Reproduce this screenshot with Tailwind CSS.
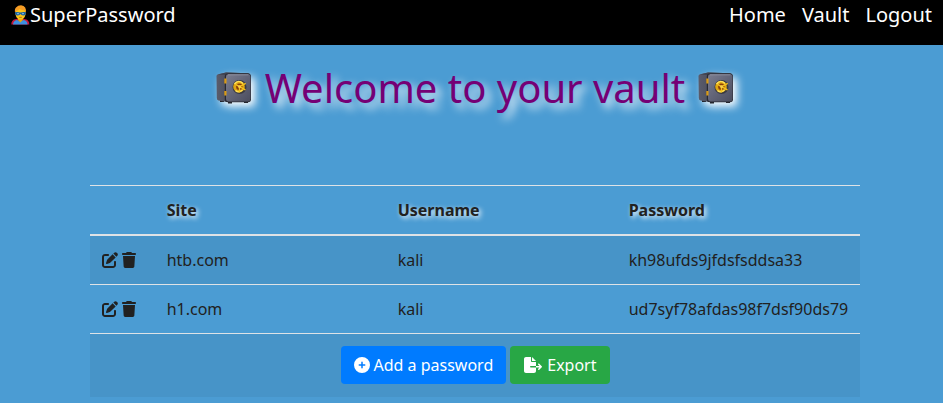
<!DOCTYPE html>
<html lang="en">
<head>
<meta charset="utf-8">
<meta name="viewport" content="width=device-width, initial-scale=1">
<title>SuperPassword</title>
<script src="https://cdn.jsdelivr.net/npm/@tailwindcss/browser@4"></script>
</head>
<body class="min-h-screen bg-[#4b9cd3] font-['Noto_Sans',sans-serif] text-base text-[#212121]">
<svg class="absolute size-0" aria-hidden="true">
  <defs>
    <linearGradient id="face" x1="0" y1="0" x2="1" y2="1">
      <stop offset="0" stop-color="#7b7d8f"/><stop offset=".5" stop-color="#626477"/><stop offset="1" stop-color="#4b4d5e"/>
    </linearGradient>
    <linearGradient id="side" x1="0" y1="0" x2="1" y2="0">
      <stop offset="0" stop-color="#5a5c6c"/><stop offset="1" stop-color="#343641"/>
    </linearGradient>
  </defs>
  <symbol id="safe" viewBox="0 0 36 32">
    <path d="M4 27h4v3H4zM12 29h4v2.500h-4zM28 28.500h4v2.500h-4z" fill="#23242c"/>
    <path d="M.5 4Q.5 2.800 2 2.300L10 .5l22 .7q2 0 2 2L11 30 2.500 28.500Q.8 28 .8 26z" fill="url(#side)"/>
    <path d="M2 2.500 10 .5l22 .7 1 1-23 .8z" fill="#41434f"/>
    <rect x="8.800" y="1.500" width="26.200" height="28.800" rx="3" fill="#292a33"/>
    <rect x="10" y="2.300" width="24.500" height="27.200" rx="2.400" fill="url(#face)"/>
    <path d="M12 2.800h20.500" stroke="#9c9eae" stroke-width=".7"/>
    <path d="M8.300 6.500h2.200v5H8.300zM8.300 19h2.200v4.500H8.300z" fill="#d99b16"/>
    <circle cx="23.500" cy="15" r="7" fill="#3a3a42"/>
    <circle cx="23" cy="14.700" r="5.800" fill="#dfa712"/>
    <path d="M18.500 12q4-5 8.500-.5M19.500 18.500q3 3 7-.5" fill="none" stroke="#ffe05a" stroke-width="1.400"/>
    <circle cx="23.300" cy="14.700" r="3.200" fill="#8a3f0c"/>
    <path d="m23.500 14.700-3.500-2M23.500 14.700l5.800-3M23.500 14.700v5M23.500 14.700l5.500 3" stroke="#f5c11c" stroke-width="1.400" stroke-linecap="round"/>
    <circle cx="23.500" cy="14.700" r="1.400" fill="#f7d14b"/>
  </symbol>
  <symbol id="pen" viewBox="0 0 512 512"><path fill="currentColor" d="M471.600 21.700c-21.900-21.900-57.300-21.900-79.200 0L362.300 51.700l97.900 97.900 30.100-30.100c21.900-21.900 21.900-57.300 0-79.200L471.600 21.700zm-299.200 220c-6.100 6.100-10.800 13.600-13.500 21.900l-29.600 88.800c-2.900 8.600-.6 18.100 5.800 24.600s15.900 8.700 24.600 5.800l88.800-29.600c8.200-2.700 15.700-7.400 21.900-13.500L437.700 172.300 339.700 74.300 172.400 241.700zM96 64C43 64 0 107 0 160V416c0 53 43 96 96 96H352c53 0 96-43 96-96V320c0-17.700-14.300-32-32-32s-32 14.300-32 32v96c0 17.700-14.300 32-32 32H96c-17.700 0-32-14.300-32-32V160c0-17.700 14.300-32 32-32h96c17.700 0 32-14.300 32-32s-14.300-32-32-32H96z"/></symbol>
  <symbol id="trash" viewBox="0 0 448 512"><path fill="currentColor" d="M135.200 17.700L128 32H32C14.300 32 0 46.300 0 64S14.300 96 32 96H416c17.700 0 32-14.300 32-32s-14.300-32-32-32H320l-7.200-14.300C307.400 6.800 296.300 0 284.200 0H163.800c-12.100 0-23.200 6.800-28.600 17.700zM416 128H32L53.200 467c1.600 25.300 22.600 45 47.900 45H346.900c25.300 0 46.300-19.700 47.900-45L416 128z"/></symbol>
</svg>

<nav class="flex h-[45px] items-start justify-between bg-black px-[11px] text-xl leading-[30px] text-white">
  <a href="#" class="flex items-center">
    <svg class="h-5 w-[19px]" viewBox="0 0 19 20" aria-hidden="true">
      <path d="M.3 19.500q0-4.500 4-5.200l2-.6h6l2 .6q4 .7 4 5.200z" fill="#c5163b"/>
      <path d="M2 19.500q.3-3.800 4-4.500l3.300 1.500 3.300-1.500q3.700.7 4 4.500z" fill="#3b8fe0"/>
      <path d="M7 11.500h4.800V15l-2.400 2.500L7 15z" fill="#e9a900"/>
      <path d="M4.500 6.500q0-4 5-4t5 4v3q-1 5-5 5t-5-5z" fill="#fcc419"/>
      <path d="M4.200 8Q3.200 4 5 2.500 7 .3 10 .3q6 .4 4.700 7.700l-1-2.500q-3-.2-5-1.500-2 2-3.700 2z" fill="#f59b24"/>
      <path d="M4 7.200q2.700-.5 5.500.3 2.700-.8 5.300-.3.400 3-2.300 3.200-2 .2-3-1.400-1 1.600-3 1.400-2.700-.2-2.500-3.200z" fill="#1864a5"/>
      <path d="M6 8.700h2M11 8.700h2" stroke="#b8d4e8" stroke-width=".8"/>
      <path d="M8.200 12.400h2.600" stroke="#a45a0b" stroke-width=".7"/>
    </svg>
    <span>SuperPassword</span>
  </a>
  <div class="flex gap-4">
    <a href="#">Home</a>
    <a href="#">Vault</a>
    <a href="#">Logout</a>
  </div>
</nav>

<main class="pb-1.5 pl-[7px]">
  <h1 class="flex items-center justify-center gap-[13px] pt-[19px] text-[40px] leading-[48px] text-[#750075] text-shadow-[5px_5px_10px_white]">
    <svg class="h-8 w-9 drop-shadow-[4px_4px_4px_white]" aria-hidden="true"><use href="#safe"/></svg>
    <span>Welcome to your vault</span>
    <svg class="h-8 w-9 drop-shadow-[4px_4px_4px_white]" aria-hidden="true"><use href="#safe"/></svg>
  </h1>

  <table class="mx-auto mt-[73px] w-full max-w-[770px] table-fixed border-collapse text-left leading-6">
    <colgroup><col class="w-[8.4%]"><col class="w-[30%]"><col class="w-[30%]"><col></colgroup>
    <thead class="border-t border-b-2 border-t-[#dee2e6] border-b-[#dee2e6] text-shadow-[2px_2px_5px_white]">
      <tr>
        <th class="p-3" aria-label="Actions"></th>
        <th class="p-3 font-bold">Site</th>
        <th class="p-3 font-bold">Username</th>
        <th class="p-3 font-bold">Password</th>
      </tr>
    </thead>
    <tbody>
      <tr class="border-b border-[#dee2e6] bg-black/5">
        <td class="p-3"><div class="flex gap-1">
          <button type="button" aria-label="Edit htb.com"><svg class="size-4"><use href="#pen"/></svg></button>
          <button type="button" aria-label="Delete htb.com"><svg class="h-4 w-3.5"><use href="#trash"/></svg></button>
        </div></td>
        <td class="p-3">htb.com</td>
        <td class="p-3">kali</td>
        <td class="p-3">kh98ufds9jfdsfsddsa33</td>
      </tr>
      <tr class="border-b border-[#dee2e6]">
        <td class="p-3"><div class="flex gap-1">
          <button type="button" aria-label="Edit h1.com"><svg class="size-4"><use href="#pen"/></svg></button>
          <button type="button" aria-label="Delete h1.com"><svg class="h-4 w-3.5"><use href="#trash"/></svg></button>
        </div></td>
        <td class="p-3">h1.com</td>
        <td class="p-3">kali</td>
        <td class="p-3">ud7syf78afdas98f7dsf90ds79</td>
      </tr>
      <tr class="bg-black/5">
        <td colspan="4" class="px-3 pt-3 pb-[13px]">
          <div class="flex justify-center gap-1 text-white">
            <button type="button" class="flex items-center gap-1 rounded-sm bg-[#007bff] px-[13px] py-[7px]">
              <svg class="size-4" viewBox="0 0 512 512" fill="currentColor" aria-hidden="true"><path d="M256 512A256 256 0 1 0 256 0a256 256 0 1 0 0 512zM232 344V280H168c-13.300 0-24-10.700-24-24s10.700-24 24-24h64V168c0-13.300 10.700-24 24-24s24 10.700 24 24v64h64c13.300 0 24 10.700 24 24s-10.700 24-24 24H280v64c0 13.300-10.700 24-24 24s-24-10.700-24-24z"/></svg>
              Add a password
            </button>
            <button type="button" class="flex items-center gap-1 rounded-sm bg-[#28a745] px-[13px] py-[7px]">
              <svg class="h-4 w-5" viewBox="0 0 576 512" fill="currentColor" aria-hidden="true"><path d="M0 64C0 28.700 28.700 0 64 0H224V128c0 17.700 14.300 32 32 32H384V288H216c-13.300 0-24 10.700-24 24s10.700 24 24 24H384V448c0 35.300-28.700 64-64 64H64c-35.300 0-64-28.700-64-64V64zM384 336V288H494.100l-39-39c-9.400-9.400-9.400-24.600 0-33.900s24.600-9.400 33.900 0l80 80c9.400 9.400 9.400 24.600 0 33.900l-80 80c-9.400 9.400-24.600 9.400-33.900 0s-9.400-24.600 0-33.900l39-39H384zm0-208H256V0L384 128z"/></svg>
              Export
            </button>
          </div>
        </td>
      </tr>
    </tbody>
  </table>
</main>
</body>
</html>
